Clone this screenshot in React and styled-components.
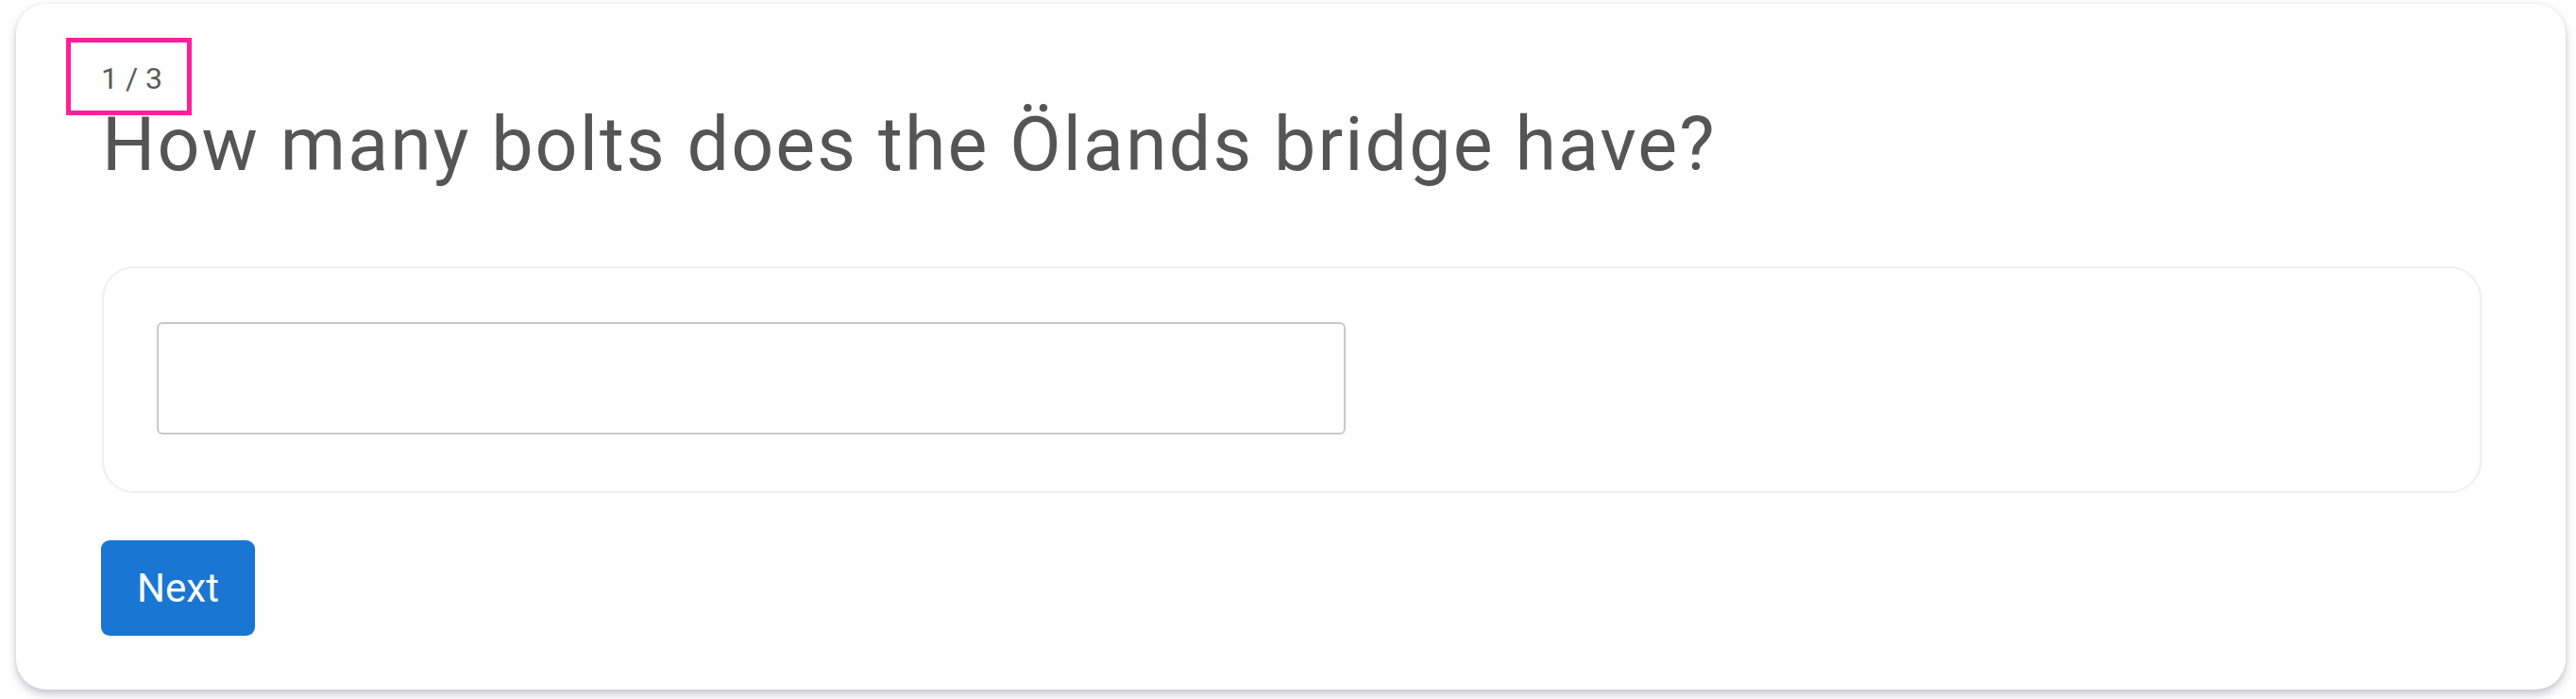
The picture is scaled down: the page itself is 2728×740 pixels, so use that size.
import React from 'react';
import styled, { createGlobalStyle } from 'styled-components';

const GlobalStyle = createGlobalStyle`
    html, body {
        margin: 0;
        padding: 0;
        background-color: #ffffff;
    }
    body {
        font-family: Roboto, "Liberation Sans", sans-serif;
    }
`

const Page = styled.main`
    padding: 4px 11px 10px 17px;
    box-sizing: border-box;
    width: 2728px;
    height: 740px;
`

const Card = styled.section`
    box-sizing: border-box;
    height: 726px;
    background-color: #ffffff;
    border-radius: 32px;
    box-shadow: 0 5px 10px rgba(60, 60, 80, 0.28), 0 0 4px rgba(0, 0, 0, 0.06);
    padding: 61px 89px 0 91px;
    display: flex;
    flex-flow: column nowrap;
    align-items: flex-start;
`

const Counter = styled.span`
    position: relative;
    display: inline-block;
    margin-left: -1px;
    font-size: 32px;
    line-height: 37.5px;
    color: #5a5a5a;
    &::after {
        content: '';
        position: absolute;
        top: -25px;
        bottom: -19px;
        left: -37px;
        right: -31px;
        border: 5px solid #ff1f9a;
    }
`

const Question = styled.h1`
    margin: 3px 0 0 0;
    font-size: 79px;
    font-weight: 400;
    line-height: 95px;
    color: #555555;
    letter-spacing: 2.1px;
`

const AnswerBox = styled.div`
    box-sizing: border-box;
    align-self: stretch;
    margin-top: 81px;
    height: 240px;
    border: 2px solid #efefef;
    border-radius: 34px;
    padding: 57px 56px;
`

const AnswerInput = styled.input`
    box-sizing: border-box;
    display: block;
    width: 1259px;
    height: 119px;
    border: 2px solid #c9c9c9;
    border-radius: 6px;
    outline: none;
    padding: 0 20px;
    font-family: inherit;
    font-size: 40px;
    color: #333333;
`

const NextButton = styled.button`
    box-sizing: border-box;
    margin-top: 50px;
    margin-left: -1px;
    width: 163px;
    height: 101px;
    border: none;
    border-radius: 9px;
    background-color: #1976d2;
    color: #ffffff;
    font-family: inherit;
    font-size: 42px;
    padding: 0;
    cursor: pointer;
`

const App = () => {
    return (
        <>
            <GlobalStyle />
            <Page>
                <Card>
                    <Counter>1 / 3</Counter>
                    <Question>How many bolts does the Ölands bridge have?</Question>
                    <AnswerBox>
                        <AnswerInput type="text" />
                    </AnswerBox>
                    <NextButton>Next</NextButton>
                </Card>
            </Page>
        </>
    )
}

export default App;
